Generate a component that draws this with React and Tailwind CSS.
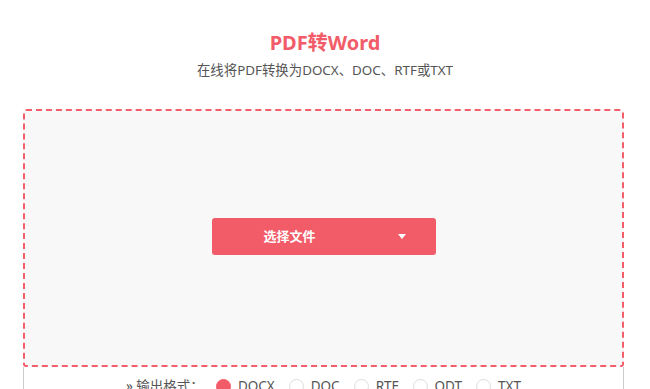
import { useState } from "react";

const FORMATS = ["DOCX", "DOC", "RTF", "ODT", "TXT"];

export default function App() {
  const [format, setFormat] = useState("DOCX");

  return (
    <div
      className="min-h-screen bg-white"
      style={{ fontFamily: '"Noto Sans", "Noto Sans CJK SC", sans-serif' }}
    >
      <div className="pt-[29px] text-center">
        <h1 className="text-[20px] leading-[28px] font-bold text-[#f25c69]">PDF转Word</h1>
        <p className="mt-[4px] text-[13.4px] leading-[18px] text-[#555]">
          在线将PDF转换为DOCX、DOC、RTF或TXT
        </p>
      </div>

      <div className="ml-[23px] mt-[30px] w-[601px]">
        {/* drop zone */}
        <div className="flex h-[258px] items-center justify-center rounded-[3px] border-2 border-dashed border-[#f25f6b] bg-[#f8f8f8] pb-[3px]">
          <button
            type="button"
            className="flex h-[37px] w-[224px] items-center rounded-[3px] bg-[#f25c69] text-white"
          >
            <span className="w-[156px] text-center text-[13px] font-bold">选择文件</span>
            <span className="flex flex-1 items-center justify-center">
              <svg width="8" height="5" viewBox="0 0 8 5">
                <path d="M0 0h8L4 5z" fill="#fff" />
              </svg>
            </span>
          </button>
        </div>

        {/* output options */}
        <div className="flex h-[40px] items-start justify-center border-x border-[#ccc] pt-[9px] text-[13.5px] text-[#555]">
          <span className="mr-[12px] leading-[20px]">» 输出格式：</span>
          {FORMATS.map((f, i) => (
            <label
              key={f}
              onClick={() => setFormat(f)}
              className={
                i < FORMATS.length - 1
                  ? "mr-[14px] flex cursor-pointer items-center gap-[7px] leading-[20px]"
                  : "flex cursor-pointer items-center gap-[7px] leading-[20px]"
              }
            >
              <span
                className={
                  f === format
                    ? "h-[15px] w-[15px] rounded-full border border-[#f25c69] bg-[#f25c69]"
                    : "h-[15px] w-[15px] rounded-full border border-[#ddd] bg-white"
                }
              />
              {f}
            </label>
          ))}
        </div>
      </div>
    </div>
  );
}
